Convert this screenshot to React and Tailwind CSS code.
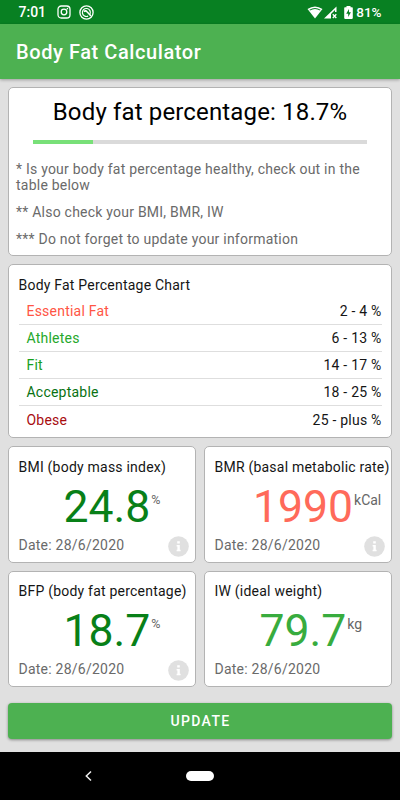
import React from "react";

const card = "rounded-[5px] border border-[#b3b3b3] bg-white";

const ranges = [
  ["Essential Fat", "2 - 4 %", "text-[#ff5545]"],
  ["Athletes", "6 - 13 %", "text-[#26a82b]"],
  ["Fit", "14 - 17 %", "text-[#17a01c]"],
  ["Acceptable", "18 - 25 %", "text-[#087212]"],
  ["Obese", "25 - plus %", "text-[#a80c10]"],
];

function StatusBar() {
  return (
    <header className="flex h-6 items-center bg-[#088022] pl-[18.5px] text-white">
      <span className="w-[38.5px] text-[14px] leading-4 font-medium">7:01</span>
      <svg width="14" height="14" viewBox="0 0 14 14" fill="none" stroke="currentColor" strokeWidth="1.3">
        <rect x="1" y="1" width="12" height="12" rx="3.3" />
        <circle cx="7" cy="7" r="2.8" />
        <circle cx="10.4" cy="3.6" r="0.8" fill="currentColor" stroke="none" />
      </svg>
      <svg className="ml-2" width="15" height="15" viewBox="0 0 15 15" fill="none" stroke="currentColor">
        <circle cx="7.5" cy="7.5" r="6.6" strokeWidth="1.3" />
        <path d="M11 9.2A4 4 0 1 0 9.1 11.1" strokeWidth="1.2" />
        <path d="M4.9 6.6Q6.6 5 8 6.8L12 11" strokeWidth="1.6" />
      </svg>
      <div className="ml-auto flex items-center pr-[18.5px]">
        <svg width="16" height="13" viewBox="0 0 16 13">
          <path d="M.5 3.1Q8-2.3 15.5 3.1L8 12.5Z" fill="currentColor" />
          <path d="M2.7 4.1Q8 .9 13.3 4.1" fill="none" stroke="#088022" strokeWidth="1.1" />
        </svg>
        <svg width="14" height="13" viewBox="0 0 14 13" className="ml-px">
          <path d="M0 12.5L12.5.5V6H11V4L7 8V12.5Z" fill="currentColor" />
          <path d="M8.8 8.2L12.3 12M12.3 8.2L8.8 12" stroke="currentColor" strokeWidth="1.3" />
        </svg>
        <svg width="9" height="13" viewBox="0 0 9 13" className="ml-[5.5px]">
          <path d="M2.5 0h4v1.3H8q.8 0 .8.8v10q0 .8-.8.8H1q-.8 0-.8-.8v-10q0-.8.8-.8h1.5Z" fill="currentColor" />
          <path d="M5 3L2.2 7.8H4.2V11L6.9 6.3H5Z" fill="#088022" />
        </svg>
        <span className="ml-[3.5px] text-[13.5px] leading-4 font-medium">81%</span>
      </div>
    </header>
  );
}

function InfoIcon() {
  return (
    <svg width="21" height="21" viewBox="0 0 21 21">
      <circle cx="10.5" cy="10.5" r="10.3" fill="#e0e0e0" />
      <path d="M9.2 5.3h2.6v2.3H9.2ZM8.6 9h3.2v4.7h.8v1.6H8.6v-1.6h.8v-3.1h-.8Z" fill="#fff" />
    </svg>
  );
}

function Metric({ title, value, unit, color, unitClass, topClass = "pt-[11px]", info = true }) {
  return (
    <section className={`${card} flex flex-col pl-[9.5px] ${topClass}`}>
      <h3 className="text-sm leading-4 tracking-[0.22px] whitespace-nowrap text-[#151515]">{title}</h3>
      <div className={`flex h-[60px] items-start ${unitClass}`}>
        <span className={`pt-[8px] text-[44.5px] leading-[48px] ${color}`}>{value}</span>
        <span className={`pt-[17px] leading-4 text-[#666] ${unit === "%" ? "pl-px text-[12.5px]" : "pl-px text-[14px]"}`}>{unit}</span>
      </div>
      <div className="flex h-[22px] items-center justify-between pr-[6px]">
        <span className="-mt-[3px] text-sm leading-4 tracking-[0.24px] text-[#6a6a6a]">Date: 28/6/2020</span>
        {info && <InfoIcon />}
      </div>
    </section>
  );
}

export default function App() {
  return (
    <div className="flex h-[800px] w-[400px] flex-col overflow-hidden bg-[#e0e0e0] font-['Roboto',sans-serif]">
      <StatusBar />
      <div className="z-10 flex h-[55px] items-center bg-[#4db151] pl-4 shadow-[0_1px_3px_rgba(0,0,0,0.3)]">
        <h1 className="text-xl leading-6 font-medium tracking-[0.58px] text-white">Body Fat Calculator</h1>
      </div>
      <main className="flex flex-1 flex-col px-2 pt-2">
        <section className={`${card} h-[169px] px-[7px]`}>
          <h2 className="mt-[10px] text-center text-2xl leading-7 tracking-[0.15px] text-black">Body fat percentage: 18.7%</h2>
          <div className="mx-[17px] mt-[14px] h-1 bg-[#dadada]">
            <div className="h-full w-[18%] bg-[#78e078]" />
          </div>
          <div className="mt-[17px] flex flex-col gap-[11px] text-sm leading-4 tracking-[0.23px] text-[#6a6a6a]">
            <p>* Is your body fat percentage healthy, check out in the table below</p>
            <p>** Also check your BMI, BMR, IW</p>
            <p>*** Do not forget to update your information</p>
          </div>
        </section>
        <section className={`${card} mt-2 h-[174px] px-[9.5px] pt-3`}>
          <h2 className="text-sm leading-4 tracking-[0.22px] text-[#151515]">Body Fat Percentage Chart</h2>
          <div className="mt-[5px] divide-y divide-[#dedede]">
            {ranges.map(([name, range, color]) => (
              <div key={name} className="flex h-[27px] items-center justify-between pl-2 text-sm leading-4 tracking-[0.22px]">
                <span className={color}>{name}</span>
                <span className="text-[#151515]">{range}</span>
              </div>
            ))}
          </div>
        </section>
        <div className="mt-2 grid grid-cols-2 grid-rows-[117px_116px] gap-2">
          <Metric title="BMI (body mass index)" value="24.8" unit="%" color="text-[#088018]" unitClass="pl-[45px]" topClass="pt-3" />
          <Metric title="BMR (basal metabolic rate)" value="1990" unit="kCal" color="text-[#ff6a5a]" unitClass="pl-[38.5px]" topClass="pt-3" />
          <Metric title="BFP (body fat percentage)" value="18.7" unit="%" color="text-[#088018]" unitClass="pl-[45px]" />
          <Metric title="IW (ideal weight)" value="79.7" unit="kg" color="text-[#38ac3e]" unitClass="pl-[45px]" info={false} />
        </div>
        <button className="mt-4 flex h-9 items-center justify-center rounded-[4px] bg-[#4db151] pl-px text-sm leading-4 font-medium tracking-[1.35px] text-white shadow-[0_1px_3px_rgba(0,0,0,0.4)]">
          UPDATE
        </button>
      </main>
      <nav className="flex h-12 items-center bg-black">
        <svg className="ml-[84px]" width="9" height="12" viewBox="0 0 9 12" fill="none" stroke="#eee" strokeWidth="1.5">
          <path d="M7 1.5L2.3 6L7 10.5" />
        </svg>
        <div className="ml-[93px] h-[10px] w-[28px] rounded-full bg-white" />
      </nav>
    </div>
  );
}
